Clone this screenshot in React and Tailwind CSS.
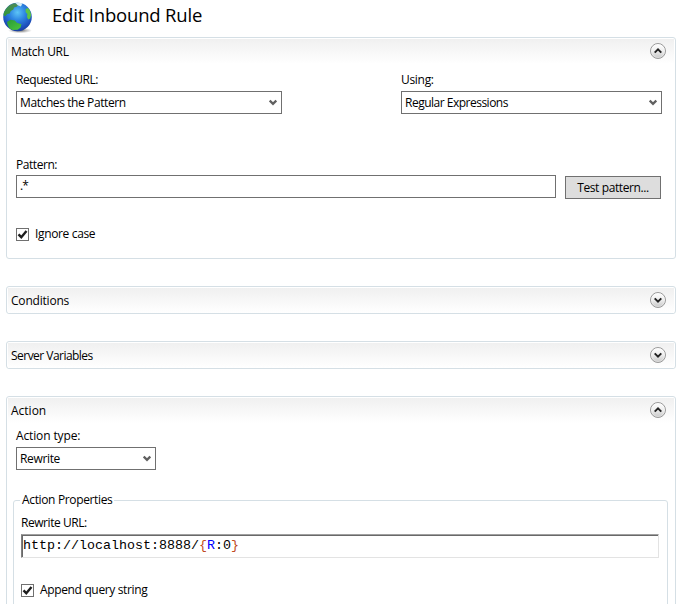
import React from 'react';

function RoundToggle({ open }) {
  return (
    <svg width="18" height="18" viewBox="0 0 18 18" className="-mt-[2px] shrink-0">
      <defs>
        <linearGradient id="toggleFill" x1="0" y1="0" x2="0" y2="1">
          <stop offset="0" stopColor="#ffffff" />
          <stop offset="0.5" stopColor="#eeeeee" />
          <stop offset="1" stopColor="#c4c4c4" />
        </linearGradient>
      </defs>
      <circle cx="9" cy="9" r="7.500" fill="url(#toggleFill)" stroke="#9a9a9a" />
      <circle cx="9" cy="9" r="6.500" fill="none" stroke="#ffffff" strokeOpacity="0.35" />
      <path d={open ? 'M5.700 10.600 9 7.400l3.300 3.200' : 'M5.700 7.400 9 10.600l3.300-3.200'} fill="none" stroke="#222222" strokeWidth="2" />
    </svg>
  );
}

function Globe() {
  return (
    <svg width="32" height="34" viewBox="0 0 32 34" className="shrink-0">
      <defs>
        <radialGradient id="ocean" cx="0.5" cy="0.34" r="0.68">
          <stop offset="0" stopColor="#5cc4f6" />
          <stop offset="0.4" stopColor="#2e86e2" />
          <stop offset="0.8" stopColor="#1d4fbc" />
          <stop offset="1" stopColor="#163a96" />
        </radialGradient>
        <linearGradient id="land" x1="0" y1="0" x2="0" y2="1">
          <stop offset="0" stopColor="#4c8a5a" />
          <stop offset="1" stopColor="#2f9a34" />
        </linearGradient>
        <linearGradient id="south" x1="0" y1="0" x2="1" y2="1">
          <stop offset="0" stopColor="#2a9a38" />
          <stop offset="1" stopColor="#4cc83c" />
        </linearGradient>
        <radialGradient id="shade" cx="0.5" cy="0.5" r="0.5">
          <stop offset="0" stopColor="#333333" stopOpacity="0.8" />
          <stop offset="1" stopColor="#777777" stopOpacity="0" />
        </radialGradient>
      </defs>
      <ellipse cx="18" cy="30.500" rx="12" ry="2.800" fill="url(#shade)" />
      <circle cx="15.500" cy="17" r="14.300" fill="url(#ocean)" />
      <path d="M3.500 9.500C5.500 6.500 8.500 4 12 3.200l3 .2 1.500 1.600-2 1.800-2.500.7-.6 2-2.700 1.500-1 2.500-2.700.5-1.500 2-2-.5c0-2 .8-4.200 2-6Z" fill="url(#land)" />
      <path d="M13.500 2.900c3-.5 5-.3 7 .6l-1.600 3-3.200-1.200Z" fill="#d5edf5" />
      <path d="M5 22l3.400-2.200 4.400.6 2 2.300 4.600 1.600-.8 3.200-3 2.300-5 .3C7.500 29 5.300 26 5 22Z" fill="url(#south)" />
      <path d="M23.500 9.500l1.700-1.500 1.600.8c1.200 2 2 3.800 2.300 6.200l-.9 3.500-2 1-1.200-2.500.4-3-1.700-1.800Z" fill="#5cc446" />
    </svg>
  );
}

function Select({ value, className }) {
  return (
    <div className={`flex h-[23px] items-center justify-between border border-[#707070] bg-white pl-[3px] pr-[4px] ${className}`}>
      {value}
      <svg width="8" height="7" viewBox="0 0 8 7" className="shrink-0">
        <path d="M.7 1.500 4 4.900 7.300 1.500" fill="none" stroke="#606060" strokeWidth="2.300" />
      </svg>
    </div>
  );
}

function Check({ children }) {
  return (
    <div className="flex h-4 items-center gap-[6px]">
      <span className="flex h-[13px] w-[13px] shrink-0 items-center justify-center border border-[#707070] bg-white">
        <svg width="11" height="11" viewBox="0 0 11 11">
          <path d="M1.500 5.300 4.300 8.200 9.500 2" fill="none" stroke="#1e1e1e" strokeWidth="2.400" />
        </svg>
      </span>
      {children}
    </div>
  );
}

function Panel({ title, open, className, children }) {
  return (
    <section className={`w-[670px] rounded-[3px] border border-[#d5dfe5] ${className}`}>
      <header className="mx-px mt-px flex h-[25px] items-center justify-between bg-gradient-to-b from-[#f0f0f0] to-white pl-[3px] pr-[7px]">
        {title}
        <RoundToggle open={open} />
      </header>
      {children}
    </section>
  );
}

const T = ({ className = '', children }) => (
  <span className={`block whitespace-nowrap leading-4 ${className}`}>{children}</span>
);

export default function App() {
  return (
    <main className="flex h-[612px] w-[685px] flex-col overflow-hidden bg-white pl-[6px] font-['Open_Sans','Noto_Sans',sans-serif] text-[12px] leading-4 text-black">
      <div className="-ml-[4px] flex h-[37px] shrink-0 items-start">
        <Globe />
        <h1 className="ml-[18px] mt-[3px] whitespace-nowrap text-[18.500px] leading-6 tracking-[-0.180px]">Edit Inbound Rule</h1>
      </div>

      <Panel title={<T className="tracking-[-0.300px]">Match URL</T>} open className="h-[222px] shrink-0">
        <div className="flex pl-[9px] pt-[8px]">
          <div className="w-[385px]">
            <T className="tracking-[-0.450px]">Requested URL:</T>
            <Select value={<T className="tracking-[-0.400px]">Matches the Pattern</T>} className="mt-[3px] w-[266px]" />
          </div>
          <div>
            <T className="tracking-[-0.300px]">Using:</T>
            <Select value={<T className="tracking-[-0.500px]">Regular Expressions</T>} className="mt-[3px] w-[261px]" />
          </div>
        </div>
        <div className="pl-[9px] pt-[43px]">
          <T className="tracking-[-0.450px]">Pattern:</T>
          <div className="mt-[2px] flex h-[24px] gap-[9px]">
            <div className="h-[23px] w-[540px] border border-[#707070] pl-[3px] pt-[2px]"><T className="tracking-[-0.800px]">.*</T></div>
            <button className="mt-px flex h-[23px] w-[96px] items-center justify-center border border-[#707070] bg-[#dddddd]">
              <T className="tracking-[-0.400px]">Test pattern...</T>
            </button>
          </div>
          <div className="pt-[27px]">
            <Check><T className="tracking-[-0.350px]">Ignore case</T></Check>
          </div>
        </div>
      </Panel>

      <Panel title={<T className="tracking-[-0.200px]">Conditions</T>} className="mt-[27px] h-[28px] shrink-0" />
      <Panel title={<T className="tracking-[-0.530px]">Server Variables</T>} className="mt-[27px] h-[28px] shrink-0" />

      <div className="mt-[27px] h-[208px] shrink-0 overflow-hidden">
        <Panel title={<T className="tracking-[0px]">Action</T>} open className="h-[240px]">
          <div className="pl-[9px] pt-[5px]">
            <T className="tracking-[-0.130px]">Action type:</T>
            <Select value={<T className="tracking-[-0.350px]">Rewrite</T>} className="mt-[3px] w-[140px]" />
          </div>
          <fieldset className="ml-[6px] mt-[22px] h-[150px] w-[655px] rounded-[3px] border border-[#d5dfe5] pl-[7px]">
            <legend className="-ml-px h-4 px-[2px]"><T className="tracking-[-0.350px]">Action Properties</T></legend>
            <T className="mt-[7px] tracking-[-0.450px]">Rewrite URL:</T>
            <div className="mt-[3px] h-[24px] w-[638px] border border-b-[#e3e3e3] border-l-[#808080] border-r-[#e3e3e3] border-t-[#a0a0a0]">
              <div className="h-[22px] border-l border-t border-[#696969] pt-[2px] font-['Liberation_Mono',monospace] text-[13.330px]">
                <T>http://localhost:8888/<span className="text-[#c04a20]">{'{'}</span><span className="text-[#0000ff]">R</span>:0<span className="text-[#c04a20]">{'}'}</span></T>
              </div>
            </div>
            <div className="mt-[24px]">
              <Check><T className="tracking-[-0.350px]">Append query string</T></Check>
            </div>
          </fieldset>
        </Panel>
      </div>
    </main>
  );
}
